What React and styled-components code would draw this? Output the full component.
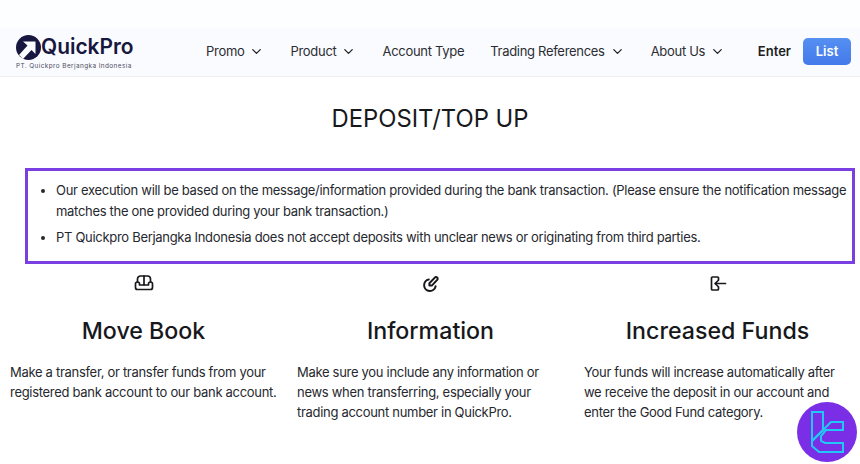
import React from "react";
import styled, { createGlobalStyle } from "styled-components";
import { ChevronDown } from "lucide-react";

const Global = createGlobalStyle`
  html, body {
    margin: 0;
    padding: 0;
    background: #ffffff;
    font-family: "Inter", "Liberation Sans", sans-serif;
    color: #1d1f24;
  }
`;

const Page = styled.div`
  position: relative;
  width: 860px;
  height: 464px;
  overflow: hidden;
`;

const Header = styled.header`
  display: flex;
  align-items: center;
  box-sizing: border-box;
  height: 77px;
  padding: 28px 9px 0 16px;
  background: linear-gradient(#fdfeff 28px, #fafbfe 28px);
  border-bottom: 1px solid #eff0f3;
`;

const Brand = styled.div`
  display: flex;
  flex-direction: column;
  width: 190px;
`;

const LogoRow = styled.div`
  display: flex;
  align-items: center;
`;

const LogoText = styled.span`
  font-size: 20.9px;
  font-weight: 600;
  line-height: 26px;
  color: #17173f;
`;

const Tagline = styled.span`
  font-size: 6.4px;
  letter-spacing: 0.42px;
  line-height: 8px;
  margin-top: 2px;
  color: #4a4d5f;
`;

const Nav = styled.nav`
  display: flex;
  align-items: center;
  gap: 26px;
  margin-bottom: 2px;
`;

const NavItem = styled.a`
  display: flex;
  align-items: center;
  gap: 5px;
  font-size: 13px;
  letter-spacing: -0.3px;
  color: #2b2d33;
`;

const Actions = styled.div`
  display: flex;
  align-items: center;
  gap: 12px;
  margin-left: auto;
  margin-bottom: 2px;
`;

const Enter = styled.a`
  font-size: 13px;
  font-weight: 600;
  color: #1c1e24;
`;

const ListButton = styled.a`
  display: flex;
  align-items: center;
  justify-content: center;
  width: 48px;
  height: 27px;
  border-radius: 5px;
  background: linear-gradient(#5590f2, #4379ea);
  font-size: 13px;
  font-weight: 600;
  color: #ffffff;
`;

const Title = styled.h1`
  margin: 26px 0 0;
  text-align: center;
  font-size: 23.8px;
  font-weight: 400;
  line-height: 32px;
  color: #17181c;
`;

const Notice = styled.ul`
  box-sizing: border-box;
  width: 830px;
  height: 96px;
  margin: 33px 0 0 25px;
  padding: 9px 0 0 28px;
  border: 3px solid #7a3fe0;
  list-style: disc;
`;

const NoticeItem = styled.li`
  font-size: 13px;
  letter-spacing: -0.3px;
  line-height: 21px;
  color: #26282e;
  margin-bottom: 5px;
`;

const Columns = styled.section`
  display: grid;
  grid-template-columns: repeat(3, 287px);
  margin-top: 11px;
`;

const Column = styled.article`
  display: flex;
  flex-direction: column;
  padding-left: 10px;
`;

const IconWrap = styled.div`
  display: flex;
  justify-content: center;
  height: 18px;
  margin-left: -10px;
  color: #17181c;
`;

const ColumnTitle = styled.h2`
  margin: 23px 0 0 -10px;
  text-align: center;
  font-size: 23.2px;
  font-weight: 500;
  line-height: 30px;
  color: #17181c;
`;

const ColumnText = styled.p`
  margin: 16px 0 0;
  width: 268px;
  font-size: 13px;
  letter-spacing: -0.3px;
  line-height: 20px;
  color: #26282e;
`;

const Badge = styled.div`
  position: absolute;
  left: 797px;
  top: 402px;
  width: 60px;
  height: 60px;
  border-radius: 50%;
  background: #7a2fe6;
  display: flex;
  align-items: center;
  justify-content: center;
`;

const LogoMark = () => (
  <svg width="25" height="25" viewBox="0 0 25 25">
    <circle cx="12.5" cy="12.5" r="12.5" fill="#17173f" />
    <path d="M7 6.5 H19.5 V19 L15.5 15 L7 24 L3 20 L11.5 10.5 Z" fill="#fbfcfe" />
  </svg>
);

const BadgeMark = () => (
  <svg width="33" height="43" viewBox="0 0 33 43" fill="none" stroke="#22c8f5" strokeWidth="2">
    <path d="M1 1 H12 V19 L1 30 Z" />
    <path d="M1 30 L20 11 H32 V19 H15 L10 25 V30 L14 32 H32 V41 H8 L1 35 V30" />
  </svg>
);

const SofaIcon = () => (
  <svg width="20" height="18" viewBox="0 0 20 18" fill="none" stroke="currentColor" strokeWidth="1.7" strokeLinecap="round" strokeLinejoin="round">
    <path d="M3.5 7V4a3 3 0 0 1 3-3h7a3 3 0 0 1 3 3v3" />
    <path d="M1.5 9a2 2 0 0 1 4 0v1h9V9a2 2 0 0 1 4 0v3.5a2 2 0 0 1-2 2h-13a2 2 0 0 1-2-2z" />
    <path d="M10 1v9" />
  </svg>
);

const PencilRingIcon = () => (
  <svg width="18" height="18" viewBox="0 0 18 18" fill="none" stroke="currentColor" strokeWidth="2" strokeLinecap="round" strokeLinejoin="round">
    <path d="M6.8 4.4a5.8 5.8 0 1 0 6.8 6.8" />
    <path d="M7.4 10.6v-2.4l5.4-5.6a1.6 1.6 0 0 1 2.4 2.3l-5.4 5.7z" />
  </svg>
);

const EnterIcon = () => (
  <svg width="18" height="18" viewBox="0 0 18 18" fill="none" stroke="currentColor" strokeWidth="1.7" strokeLinecap="round" strokeLinejoin="round">
    <path d="M9.5 5V3a1 1 0 0 0-1-1H3.5a1 1 0 0 0-1 1v11a1 1 0 0 0 1 1h5a1 1 0 0 0 1-1v-2" />
    <path d="M16.5 8.5H6M9.2 5.5L6 8.5l3.2 3" />
  </svg>
);

const navItems = [
  { label: "Promo", menu: true },
  { label: "Product", menu: true },
  { label: "Account Type" },
  { label: "Trading References", menu: true },
  { label: "About Us", menu: true },
];

const columns = [
  {
    Icon: SofaIcon,
    title: "Move Book",
    text: "Make a transfer, or transfer funds from your registered bank account to our bank account.",
  },
  {
    Icon: PencilRingIcon,
    title: "Information",
    text: "Make sure you include any information or news when transferring, especially your trading account number in QuickPro.",
  },
  {
    Icon: EnterIcon,
    title: "Increased Funds",
    text: "Your funds will increase automatically after we receive the deposit in our account and enter the Good Fund category.",
  },
];

const App = () => {
  return (
    <Page>
      <Global />
      <Header>
        <Brand>
          <LogoRow>
            <LogoMark />
            <LogoText>QuickPro</LogoText>
          </LogoRow>
          <Tagline>PT. Quickpro Berjangka Indonesia</Tagline>
        </Brand>
        <Nav>
          {navItems.map(item => (
            <NavItem key={item.label}>
              {item.label}
              {item.menu && <ChevronDown size={15} color="#1d1f24" />}
            </NavItem>
          ))}
        </Nav>
        <Actions>
          <Enter>Enter</Enter>
          <ListButton>List</ListButton>
        </Actions>
      </Header>
      <Title>DEPOSIT/TOP UP</Title>
      <Notice>
        <NoticeItem>
          Our execution will be based on the message/information provided during the bank transaction. (Please ensure the notification message matches the one provided during your bank transaction.)
        </NoticeItem>
        <NoticeItem>
          PT Quickpro Berjangka Indonesia does not accept deposits with unclear news or originating from third parties.
        </NoticeItem>
      </Notice>
      <Columns>
        {columns.map(({ Icon, title, text }) => (
          <Column key={title}>
            <IconWrap>
              <Icon />
            </IconWrap>
            <ColumnTitle>{title}</ColumnTitle>
            <ColumnText>{text}</ColumnText>
          </Column>
        ))}
      </Columns>
      <Badge>
        <BadgeMark />
      </Badge>
    </Page>
  );
};

export default App;
